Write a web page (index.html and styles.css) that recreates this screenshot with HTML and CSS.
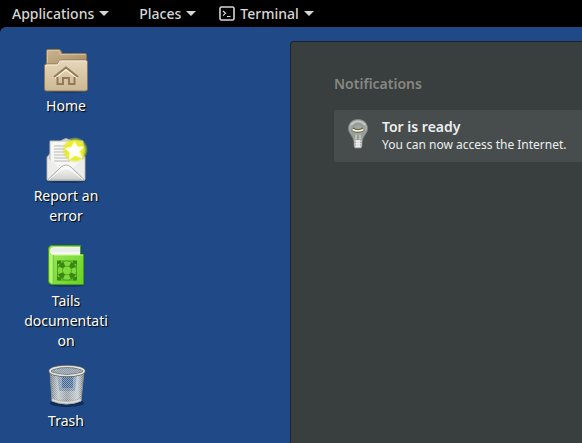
FILE: index.html
```html
<!DOCTYPE html>
<html lang="en">
<head>
<meta charset="utf-8">
<title>Desktop</title>
<link rel="stylesheet" href="styles.css">
</head>
<body>
<header class="topbar">
  <button class="menu" type="button">Applications<span class="caret"></span></button>
  <button class="menu" type="button">Places<span class="caret"></span></button>
  <button class="menu menu-app" type="button">
    <svg class="term" viewBox="0 0 16 16" aria-hidden="true"><rect x="1" y="1" width="14" height="13" rx="1.5" fill="none" stroke="#d6d6d6" stroke-width="1.6"/><path d="M4 5l2.500 2.300L4 9.600M8 10.500h3.500" fill="none" stroke="#d6d6d6" stroke-width="1.2"/></svg>Terminal<span class="caret"></span>
  </button>
</header>
<main class="desktop">
  <nav class="icons">
    <a class="item one-line" href="#home">
      <svg class="icon" viewBox="0 0 48 48" aria-hidden="true">
        <defs>
          <linearGradient id="fold" x2="0" y2="1"><stop stop-color="#e6d6b9"/><stop offset="1" stop-color="#cdb894"/></linearGradient>
          <linearGradient id="back" x2="1" y2="1"><stop stop-color="#cdb690"/><stop offset="1" stop-color="#a38a64"/></linearGradient>
        </defs>
        <ellipse cx="24" cy="45" rx="21" ry="2" fill="#0b2148" opacity=".45"/>
        <path d="M4.500 20V5q0-1.500 1.500-1.500h11q1.500 0 2 1.500l1 2.500h23q1.500 0 1.500 1.500v11z" fill="url(#back)" stroke="#8d7655"/>
        <path d="M5.500 19V5q0-.5.5-.5h11l1.500 4h25" fill="none" stroke="#e0cda9" opacity=".7"/>
        <path d="M2.500 20q0-2 2-2h10q1.500 0 2-1l1-2q.5-1 2-1h24q2 0 2 2v27q0 2-2 2h-39q-2 0-2-2z" fill="url(#fold)" stroke="#8e7755"/>
        <path d="M3.500 21q0-2 2-2h10l2.500-4h25q1.500 0 1.500 1.500" fill="none" stroke="#f5ead3"/>
        <path d="M12.500 31L24 22.500 35.500 31" fill="none" stroke="#fff4dc" stroke-width="2" transform="translate(0 1)"/>
        <path d="M12 31L24 21.500 36 31M15.500 31v7h5.500v-6h6v6h5.500v-7" fill="none" stroke="#93795a" stroke-width="2"/>
      </svg>
      <span class="label">Home</span>
    </a>
    <a class="item two-lines" href="#report">
      <svg class="icon" viewBox="0 0 48 48" aria-hidden="true">
        <defs>
          <radialGradient id="glow"><stop offset=".45" stop-color="#f3ee20"/><stop offset=".75" stop-color="#e5e91c" stop-opacity=".85"/><stop offset="1" stop-color="#d6df1b" stop-opacity="0"/></radialGradient>
          <linearGradient id="env" x2="0" y2="1"><stop stop-color="#fff"/><stop offset="1" stop-color="#cfcfcb"/></linearGradient>
        </defs>
        <ellipse cx="24" cy="45" rx="20" ry="2" fill="#0b2148" opacity=".45"/>
        <path d="M5 21L20 4q4-3 8 0l15 17v22q0 1.500-1.500 1.500h-35Q5 44.500 5 43z" fill="#dededa" stroke="#a5a7a3"/>
        <path d="M8 5h33v26L32 38H16L8 30z" fill="#f6f6f3" stroke="#b9bbb6"/>
        <path d="M12 10h16M12 13h13M12 16h14M12 19h13M12 22h19M12 25h16" stroke="#bab9b5"/>
        <path d="M5.500 22L18 33 5.500 44zM42.500 22L30 33l12.500 11z" fill="#ececea"/>
        <path d="M5.500 44L19 31q5-4 10 0l13.500 13z" fill="url(#env)" stroke="#aeb0ac"/>
        <path d="M7 43.500L19 34q5-4 10 0l12 9.500" fill="none" stroke="#fff"/>
        <circle cx="33" cy="14" r="13" fill="url(#glow)"/>
        <path d="M32.500 5.500l3 5.500 6 0-4 4.500 2.500 6.500-6.500-2.500-6 3.500.5-6.500-5-4 6.500-1.500z" fill="#fff" stroke="#fffdb7" stroke-linejoin="round"/>
      </svg>
      <span class="label">Report an error</span>
    </a>
    <a class="item three-lines" href="#documentation">
      <svg class="icon" viewBox="0 0 48 48" aria-hidden="true">
        <defs><linearGradient id="book" x2="1" y2="1"><stop stop-color="#9fec5c"/><stop offset="1" stop-color="#68d024"/></linearGradient></defs>
        <ellipse cx="25" cy="44" rx="18" ry="2" fill="#0b2148" opacity=".4"/>
        <path d="M6.500 8q0-3.500 4-3.500h28v9h3v30H10q-3.500 0-3.500-4z" fill="url(#book)" stroke="#44a010"/>
        <path d="M10.500 6H38v8H11q-3-1-3-4t3-4z" fill="#f6f6f2"/>
        <path d="M11 8h27M10 10h28" stroke="#dcdcd7" stroke-width=".7"/>
        <path d="M10 14h31" stroke="#c4f993"/>
        <path d="M7.500 10v29q0 3 3 3.500V14Q8 13.500 7.500 10" fill="#b4f379"/>
        <path d="M11.500 14v29" stroke="#7ccc45"/>
        <rect x="15.500" y="20" width="19" height="19" rx="3" fill="none" stroke="#4c9f1d"/>
        <circle cx="25" cy="29.500" r="7" fill="none" stroke="#4c9f1d" stroke-width="6"/>
        <circle cx="25" cy="29.500" r="7" fill="none" stroke="#7fd83c" stroke-width="4.500"/>
        <circle cx="25" cy="29.500" r="7" fill="none" stroke="#3b8715" stroke-width="5" stroke-dasharray="5 5.996" stroke-dashoffset="-3"/>
        <path d="M15 19.500h4v3l-4 1zM35 19.500h-4v3l4 1zM15 39.500h4v-3l-4-1zM35 39.500h-4v-3l4-1z" fill="#3b8715"/>
      </svg>
      <span class="label">Tails documentation</span>
    </a>
    <a class="item one-line" href="#trash">
      <svg class="icon" viewBox="0 0 48 48" aria-hidden="true">
        <defs>
          <pattern id="mesh" width="2" height="2" patternUnits="userSpaceOnUse"><path d="M0 0h1v1H0zM1 1h1v1H1z" fill="#f4f4f0"/></pattern>
          <linearGradient id="metal"><stop stop-color="#777b77"/><stop offset=".25" stop-color="#dededa"/><stop offset=".5" stop-color="#a3a7a5"/><stop offset=".8" stop-color="#e8e8e4"/><stop offset="1" stop-color="#777b77"/></linearGradient>
        </defs>
        <ellipse cx="25" cy="42" rx="17" ry="4" fill="#071b3b" opacity=".6"/>
        <path d="M8 10l2 30q14 6 29 0l3-30z" fill="url(#metal)" opacity=".82"/>
        <path d="M15 13h20l-2 17H17z" fill="#356098" opacity=".4"/>
        <path d="M20 14h11v13H20z" fill="#224e8b" opacity=".6"/>
        <path d="M8 10l2 30q14 6 29 0l3-30z" fill="url(#mesh)" opacity=".45"/>
        <path d="M8 10l2 30q14 6 29 0l3-30" fill="none" stroke="#8b8f8b"/>
        <path d="M10 37.500q14 6 29 0V40q-14 6-29 0z" fill="#e1e1dd" stroke="#a7aaa6" stroke-width=".7"/>
        <ellipse cx="25" cy="10" rx="17" ry="4.500" fill="#8d9aa9"/>
        <ellipse cx="25" cy="10" rx="17" ry="4.500" fill="url(#mesh)" opacity=".35"/>
        <ellipse cx="25" cy="10" rx="17" ry="4.500" fill="none" stroke="#5f645f" stroke-width="3"/>
        <ellipse cx="25" cy="10" rx="17" ry="4.500" fill="none" stroke="#e4e4df" stroke-width="1.700"/>
      </svg>
      <span class="label">Trash</span>
    </a>
  </nav>
  <section class="panel">
    <h2 class="heading">Notifications</h2>
    <article class="note">
      <svg class="bulb" viewBox="0 0 24 32" aria-hidden="true">
        <defs><radialGradient id="glass"><stop stop-color="#b0b4ac"/><stop offset=".65" stop-color="#969a95"/><stop offset="1" stop-color="#b4b7b4"/></radialGradient></defs>
        <path d="M12 1.500c-6 0-9.500 4-9.500 9 0 5 4.500 7 5.500 13h8c1-6 5.500-8 5.500-13 0-5-3.500-9-9.500-9z" fill="url(#glass)" stroke="#7d827e"/>
        <path d="M5 7q7-7 14 0" fill="none" stroke="#d5d8d3" stroke-width="1.500" opacity=".7"/>
        <path d="M6.500 11q5.500 4 11 0" fill="none" stroke="#5f6152" stroke-width="4"/>
        <path d="M6.500 11.500q5.500 3 11 0" fill="none" stroke="#ffffdf" stroke-width="1.600"/>
        <path d="M10 17v6M14 17v6" stroke="#d6d8d5"/>
        <path d="M8 22h8v6l-1 2H9l-1-2z" fill="#d7d9d7" stroke="#8b908c" stroke-width=".7"/>
        <path d="M8 24.500h8M8 27h8" stroke="#a0a5a1"/><path d="M12 22v7" stroke="#fff" stroke-width="4" opacity=".6"/>
      </svg>
      <div class="note-text">
        <h3 class="title">Tor is ready</h3>
        <p class="body">You can now access the Internet.</p>
      </div>
    </article>
  </section>
</main>
</body>
</html>
```
FILE: styles.css
```css
* {
  box-sizing: border-box;
}

body {
  margin: 0;
  min-height: 100vh;
  display: flex;
  flex-direction: column;
  overflow: hidden;
  background: #000;
  font-family: "Noto Sans", "Open Sans", sans-serif;
  font-size: 14px;
}

.topbar {
  display: flex;
  gap: 30px;
  height: 27px;
  padding: 0 12px;
}

.menu {
  display: flex;
  align-items: center;
  gap: 5px;
  padding: 0;
  border: 0;
  background: none;
  color: #d6d6d6;
  font: 500 14px/26px "Noto Sans", "Open Sans", sans-serif;
  white-space: nowrap;
}

.menu-app {
  margin-left: -7px;
}

.caret {
  border: 5px solid transparent;
  border-top-color: #d6d6d6;
  border-bottom: 0;
}

.term {
  width: 16px;
  height: 16px;
}

.desktop {
  flex: 1;
  display: grid;
  grid-template-columns: 290px 1fr;
  background: #204a87;
  border-top-left-radius: 6px;
}

.icons {
  display: flex;
  flex-direction: column;
  width: 84px;
  margin-left: 24px;
  padding-top: 19px;
}

.item {
  display: flex;
  flex-direction: column;
  align-items: center;
  gap: 2px;
  color: #fff;
  text-decoration: none;
}

.one-line {
  padding-bottom: 20px;
}

.two-lines {
  padding-bottom: 15px;
}

.three-lines {
  padding-bottom: 10px;
}

.icon {
  width: 48px;
  height: 48px;
}

.label {
  max-width: 84px;
  line-height: 20px;
  text-align: center;
  overflow-wrap: anywhere;
  text-shadow: 1px 1px 1px #000;
}

.panel {
  min-width: 0;
  margin-top: 14px;
  padding: 32px 0 0 43px;
  background: #393f3f;
  border: 1px solid #1c2426;
  border-width: 1px 0 0 1px;
  border-top-left-radius: 4px;
}

.heading {
  margin: 0 0 16px;
  color: #868882;
  font-size: 14px;
  font-weight: 600;
  line-height: 20px;
}

.note {
  display: flex;
  gap: 12px;
  height: 52px;
  padding: 8px 0 8px 12px;
  background: #474d4c;
  border-radius: 3px 0 0 3px;
}

.bulb {
  flex: none;
  width: 24px;
  height: 32px;
}

.title,
.body {
  margin: 0;
  color: #eee;
  line-height: 18px;
  white-space: nowrap;
}

.title {
  font-size: 14px;
  font-weight: 600;
}

.body {
  font-size: 12px;
}
```
